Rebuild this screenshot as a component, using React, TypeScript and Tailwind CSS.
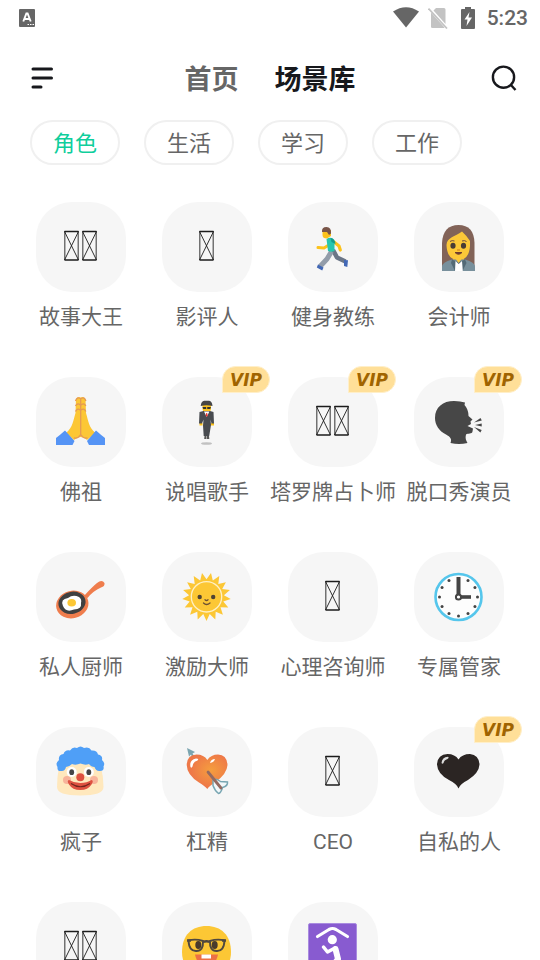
import React, { useState } from 'react';

interface Scene {
  name: string;
  icon: React.ReactNode;
  vip?: boolean;
}

// Placeholder glyph for emoji the device font has no drawing for
const Tofu = ({ count = 1 }: { count?: number }) => {
  const starts = count === 2 ? [28.5, 46.5] : [37.5];
  return (
    <g fill="none" stroke="#1c1c1c">
      {starts.map((x) => (
        <g key={x}>
          <path d={`M${x} 29.5h14M${x} 58h14`} strokeWidth="1.3" />
          <path d={`M${x + 0.3} 29v29M${x + 13.7} 29v29`} strokeWidth="1.2" opacity=".75" />
          <path d={`M${x} 29.5l14 28.500M${x + 14} 29.5l-14 28.500`} strokeWidth=".9" />
        </g>
      ))}
    </g>
  );
};

const Runner = () => (
  <g fill="none" strokeLinejoin="round">
    <path d="M45 48L49 55.500L57.500 59.500" stroke="#6b7687" strokeWidth="4.500" />
    <path d="M56 58l4 .3-.7 6.700-3.300-1z" fill="#4268b5" />
    <path d="M43.500 49.500L39 57L32 64.500" stroke="#939daa" strokeWidth="5" />
    <path d="M30 62.500l5.500 3-1.300 3-5.400-3z" fill="#4268b5" />
    <path d="M40 43.500L36 46L30 45.500" stroke="#fcc21b" strokeWidth="3" strokeLinecap="round" />
    <path d="M46 40L51 44L52.300 48" stroke="#fcc21b" strokeWidth="3.200" strokeLinecap="round" />
    <path d="M38.500 37C42 34.500 46 36 46.500 40L46.500 49Q43 50.500 40 49Z" fill="#26c6ae" />
    <path d="M42.500 36q4.500 .5 5 6l-4-2z" fill="#149c8b" />
    <path d="M34.500 28h8.500v6l-4 2.500q-4.500 0-4.500-3.500z" fill="#fcc21b" />
    <path d="M34 30q-.5-5 4.500-5 5 .3 4.500 6.500l-2 1.500-2-3z" fill="#795548" />
  </g>
);

const OfficeWoman = () => (
  <g>
    <path d="M28 69V41Q29 23 44.500 23Q60 23 60.500 41V69Z" fill="#826358" />
    <path d="M39 53h11v9l-5 5-6-5z" fill="#eba52d" />
    <path d="M32.500 43C33 35 41 35 48 29.500Q52 33 56 39V44Q55 58 44.500 58Q33 58 32.500 43Z" fill="#fcc838" />
    <ellipse cx="39" cy="43.800" rx="2.600" ry="3" fill="#493c35" />
    <ellipse cx="49.500" cy="43.800" rx="2.600" ry="3" fill="#493c35" />
    <path d="M36 39.500q2-1.500 4.500-.5M48 39q2.500-1 4.500.5" fill="none" stroke="#6d4c41" strokeWidth="1" />
    <path d="M43 48h3" stroke="#d88b20" strokeWidth="1.200" />
    <path d="M41 50.500h7q-3.500 3.500-7 0z" fill="#6d3c2f" stroke="#6d3c2f" />
    <path d="M28 69v-4q0-5 10-7.500h13q10 2.500 10 7.500v4z" fill="#78909c" />
    <path d="M38 57.500l-1 3.500 4 8h7.500l4-8-1.500-3.500-6.500 3z" fill="#536a76" />
    <path d="M41.500 59l3.200 3 3.300-3 .8 10h-7.800z" fill="#fff" />
    <path d="M41 56l3.700 5 3.500-5z" fill="#fcc838" />
  </g>
);

const PrayingHands = () => (
  <g>
    <path d="M30 56C37 50 37 44 39.500 36L40 22Q42 19 44.700 20.500Q47.500 19 49.500 22L50 36C52.500 44 52.500 50 59.500 56L51 63Q48 60 44.700 60Q41.500 60 38 63Z" fill="#fcc735" />
    <path d="M44.700 21v38M39.500 24q1.500-4.500 4.700-2.500M45.200 21.500q3.200-2 4.700 2.500M39.500 29q2-3.500 4.700-1M45.200 28q2.700-2.500 4.700 1M39.500 34.500q2-4 4.700-1.500M45.200 33q2.700-2.500 4.700 1.500M38 61q4 1 6.700-3.500Q47.500 62 51.500 61" fill="none" stroke="#e59a55" strokeWidth="1.300" />
    <path d="M20 61q4-3 9-7.500L38.500 64l-2 4H20zM69 61q-4-3-9-7.500L51 64l2 4h16z" fill="#5594f5" />
  </g>
);

const SuitMan = () => (
  <g>
    <ellipse cx="44.500" cy="66.500" rx="5.500" ry="1.300" fill="#c1c1c1" />
    <path d="M40.500 28h8.500v4q-1 4.500-4.300 4.500T40.500 32z" fill="#fcc21b" />
    <path d="M38.700 29q.5-5 3.500-5.300h5Q50 24 50.500 29q-6-1.500-11.800 0z" fill="#464646" />
    <path d="M40.500 30h3.700v2h-3zM45.200 30H49l-.8 2h-3z" fill="#333" />
    <path d="M37.500 46h3v2.500h-3zM49 46h3v2.500h-3z" fill="#fcc21b" />
    <path d="M41.500 34L37.500 35 37 46.500h3l1.500-4-.5 6 .7 10.500h5.500L49 48l-.5-5.500 1 4h2.500L51.500 35 48 34z" fill="#484b50" />
    <path d="M42 34.500l2.700 5.500 2.700-5.500z" fill="#fff" />
    <path d="M44.200 36h1l.5 2.500-1 1.500-.9-1.500z" fill="#e53935" />
    <path d="M42.500 59h2v3h-2.300zM45 59h2l.3 3H45z" fill="#555" />
  </g>
);

const SpeakingHead = () => (
  <g fill="#474747">
    <path d="M36.500 66C38 62 36.500 60 32 57.500C25 54 21 48 21 41C21 30 29 24 40 24C45 24 47.500 25 51 25.500L50.500 28C54 32 54.500 36 54.500 39L58.500 42.500L56.500 44.500L57 47L53.500 49L59 51.500L58.500 54.500C58 57.500 54 56 52 57.500C51 61 52 63.500 53.500 66Q45 68 36.500 66Z" />
    <path d="M60 45.500l6.500-4.500 1.300 2.500zM61 48l6.700-1.500v3zM60 50l7.700 3-1.300 2.500z" />
  </g>
);

const FryingPan = () => (
  <g>
    <path d="M48 44Q56 35 61 31Q66 27 68.500 31Q69 34.500 65 35.500Q57 39 51.500 46Z" fill="#ef7d4d" />
    <ellipse cx="36.300" cy="52.500" rx="16.300" ry="13.700" fill="#ef7d4d" transform="rotate(-14 36.300 52.500)" />
    <ellipse cx="36" cy="50.800" rx="13.700" ry="11" fill="#404040" transform="rotate(-14 36 50.800)" />
    <path d="M27 54Q24 47 32 46Q37 42 43 45Q46 47 45 51Q46 57 38 57.500Q30 61 27 54Z" fill="#fff" />
    <ellipse cx="35.700" cy="50.700" rx="4.300" ry="3.800" fill="#fcc735" />
  </g>
);

const sunRays = Array.from({ length: 34 }, (_, i) => {
  const r = i % 2 ? 24.3 : 17.5;
  const a = (i * Math.PI) / 17 + Math.PI / 2 - Math.PI / 17;
  return `${(44.5 + r * Math.cos(a)).toFixed(1)},${(44.8 + r * Math.sin(a)).toFixed(1)}`;
}).join(' ');

const Sun = () => (
  <g>
    <polygon points={sunRays} fill="#fcc735" />
    <circle cx="44.500" cy="44.800" r="15.200" fill="#fcc735" stroke="#fff0c4" strokeWidth="1.300" />
    <circle cx="37.700" cy="45" r="2.200" fill="#504333" />
    <circle cx="51.200" cy="45" r="2.200" fill="#504333" />
    <path d="M41.500 51q3 3 6.500 0M43 47.800q1.500 1.500 3 0" fill="none" stroke="#6d5132" strokeWidth="1.300" strokeLinecap="round" />
  </g>
);

const Clock = () => (
  <g>
    <circle cx="44.500" cy="45" r="23" fill="#fdfdfd" stroke="#55c6ec" strokeWidth="2.600" />
    {Array.from({ length: 11 }, (_, i) => {
      const a = ((i + 1) * Math.PI) / 6;
      return <circle key={i} cx={44.5 + 19 * Math.sin(a)} cy={45 - 19 * Math.cos(a)} r="1.500" fill="#444" />;
    })}
    <path d="M44.500 45V25" stroke="#444" strokeWidth="4" />
    <path d="M44.500 45H57" stroke="#444" strokeWidth="3.600" />
    <circle cx="44.500" cy="45" r="2.600" fill="#fff" stroke="#444" strokeWidth="2" />
  </g>
);

const Clown = () => (
  <g>
    <path d="M23 40Q21 50 21 60Q21 68.500 44.300 68.500Q67.500 68.500 67.500 60Q67.500 50 65 40Q44 28 23 40Z" fill="#ffe8bd" />
    <path d="M25 44Q21 44.500 21.500 40Q19 36 23 33Q22 28 27.500 27Q29 22.500 34 23.500Q37 19 41 21Q44.500 18 48 21Q53 19 55.500 23.500Q61 23 62 27.500Q67 28.500 66 33Q69.500 36 67.500 39.500Q68.500 44 64 44Q60 44.500 58.500 40Q55 40 53 37Q49 38.500 44.500 36.500Q40 38.500 36 37Q33 40 30 40Q29 44.500 25 44Z" fill="#4f9ff7" />
    <circle cx="31" cy="53" r="4" fill="#f6a18f" opacity=".75" />
    <circle cx="58" cy="53" r="4" fill="#f6a18f" opacity=".75" />
    <circle cx="35.700" cy="45" r="5" fill="#fff" />
    <circle cx="52.800" cy="45" r="5" fill="#fff" />
    <ellipse cx="35.700" cy="45.200" rx="2.400" ry="2.900" fill="#454545" />
    <ellipse cx="52.800" cy="45.200" rx="2.400" ry="2.900" fill="#454545" />
    <path d="M33 53Q38 56 44.300 56Q51 56 55.500 53Q58 53.500 55.500 57.500Q52 63 44.300 63Q36.500 63 33 57.500Q30.500 53.500 33 53Z" fill="#de5140" />
    <path d="M35 56.500q9.500 6.500 19 0" fill="none" stroke="#70261d" strokeWidth="1.200" />
    <circle cx="44.300" cy="50.300" r="4" fill="#de5140" />
  </g>
);

const ArrowHeart = () => (
  <g>
    <defs>
      <radialGradient id="heartFill" cx=".6" cy=".45" r=".5">
        <stop offset="0" stopColor="#f59e3e" />
        <stop offset="1" stopColor="#ee7848" />
      </radialGradient>
    </defs>
    <path d="M25 21l8 4-2.500 1.500 2 3-2.500 .5-1-2.500-2 2z" fill="#7ba5b0" />
    <path d="M45.300 62Q43 59 37 55.500Q25 48 24.700 38Q25 28 34.500 27.500Q42 27.500 45.300 33Q49 27.500 56 27.500Q65 28 65.500 38Q65 47 53 55.500Q47 59 45.300 62Z" fill="url(#heartFill)" />
    <path d="M28.500 40q-1.500-7 5.500-8.500 3.500 0 1.500 2-4.500 1-5 6-1 2-2 .5zM48 36q1-4 5-4-1 3.500-5 4z" fill="#fff" />
    <path d="M51 58.500L51 52Q55 51.500 58.500 54.500L65.500 55Q66 59 60.500 60.500Q59 66 56.500 66.500Q53 64 51 58.500Z" fill="#f2f8fa" stroke="#78a6b2" strokeWidth="1.500" transform="rotate(0 58 59)" />
    <path d="M46 45L59 61" stroke="#946a61" strokeWidth="2.800" strokeLinecap="round" />
  </g>
);

const BlackHeart = () => (
  <g>
    <path d="M44.500 61.500Q43 57 35 53Q23.500 47 23 37.500Q23.500 27.500 33.500 27Q41 27 44.500 32.500Q48 27 56 27Q65 28 65.500 37.500Q65 46 54 53Q46 57 44.500 61.500Z" fill="#2b2523" />
    <path d="M27.500 36q.5-6 6.500-6.300 1.500 1-.5 2.300-3.500 1-4 4-1 1.500-2 0z" fill="#ddd" />
  </g>
);

const NerdFace = () => (
  <g>
    <path d="M20 50C20 33 30 24 44.500 24C59 24 69 33 69 50C69 66 58 72 44.500 72C31 72 20 66 20 50Z" fill="#fcc735" />
    <ellipse cx="36.300" cy="43" rx="3" ry="4" fill="#493b2c" />
    <ellipse cx="52.700" cy="43" rx="3" ry="4" fill="#493b2c" />
    <path d="M26.500 38.500Q33.500 36.500 41 39Q41.500 49 34.500 49Q27 49.500 26.500 38.500ZM48 39Q55.500 36.500 62.500 38.500Q62 49.500 54.500 49Q47.500 49 48 39Z" fill="none" stroke="#50483f" strokeWidth="1.900" />
    <path d="M25 38.500H29M60 38.500h4M41 40q3.500-1.500 7 0" fill="none" stroke="#50483f" strokeWidth="2.400" />
    <path d="M33 52.500h23q-2 11-11.500 11T33 52.500z" fill="#ed7045" />
    <path d="M39.500 52.500h9.500v4h-9.500z" fill="#fff" />
  </g>
);

const Worship = () => (
  <g>
    <rect x="20.500" y="21.500" width="48" height="48" rx="1.500" fill="#885bd0" stroke="#a98be0" />
    <g fill="none" stroke="#fff" strokeLinecap="round" strokeLinejoin="round">
      <path d="M29.500 34.500L41 27.500Q44.500 25.500 48 27.500L59.500 34.500" strokeWidth="3.200" />
      <path d="M35.500 45L39.500 50L47 46" strokeWidth="3.500" />
      <path d="M47.500 47L50 57L44 65H34" strokeWidth="6" />
    </g>
    <circle cx="44.300" cy="37.700" r="4.600" fill="#fff" />
  </g>
);

const scenes: Scene[] = [
  { name: '故事大王', icon: <Tofu count={2} /> },
  { name: '影评人', icon: <Tofu /> },
  { name: '健身教练', icon: <Runner /> },
  { name: '会计师', icon: <OfficeWoman /> },
  { name: '佛祖', icon: <PrayingHands /> },
  { name: '说唱歌手', icon: <SuitMan />, vip: true },
  { name: '塔罗牌占卜师', icon: <Tofu count={2} />, vip: true },
  { name: '脱口秀演员', icon: <SpeakingHead />, vip: true },
  { name: '私人厨师', icon: <FryingPan /> },
  { name: '激励大师', icon: <Sun /> },
  { name: '心理咨询师', icon: <Tofu /> },
  { name: '专属管家', icon: <Clock /> },
  { name: '疯子', icon: <Clown /> },
  { name: '杠精', icon: <ArrowHeart /> },
  { name: 'CEO', icon: <Tofu /> },
  { name: '自私的人', icon: <BlackHeart />, vip: true },
  { name: '', icon: <Tofu count={2} /> },
  { name: '', icon: <NerdFace /> },
  { name: '', icon: <Worship /> },
];

const categories = ['角色', '生活', '学习', '工作'];

const StatusBar = () => (
  <div className="flex h-9 shrink-0 items-center justify-between pl-[19px] pr-3 text-[#666]">
    <svg className="h-[18px] w-4" viewBox="0 0 16 18">
      <rect width="16" height="18" rx="1" fill="#666" />
      <path d="M4.300 12.500L7.400 4.500h1.200l3.100 8M5.600 10h4.800" fill="none" stroke="#fff" strokeWidth="1.900" />
      <path d="M8.500 15.500h1.500M11 15.500h1.500M13.500 15.500H15" stroke="#fff" strokeWidth="1.200" />
    </svg>
    <div className="flex items-center">
      <svg className="h-[22px] w-[26px]" viewBox="0 0 26 22">
        <path d="M0 4.500Q13-4 26 4.500L13 20.500Z" fill="#666" />
      </svg>
      <svg className="ml-[9px] h-[22px] w-5" viewBox="0 0 20 22">
        <path d="M8 1h8q1.500 0 1.500 1.500V17L5.500 3.500z" fill="#c3c3c3" />
        <path d="M3 5.500L16.500 20.500Q16 21 15 21H4.500Q3 21 3 20z" fill="#c3c3c3" />
        <path d="M.5 1.500L19 21.500" stroke="#c3c3c3" strokeWidth="1.700" />
      </svg>
      <svg className="ml-[13px] h-[22px] w-[14px]" viewBox="0 0 14 22">
        <path d="M4 0h6v2h3q1 0 1 1v18q0 1-1 1H1q-1 0-1-1V3q0-1 1-1h3z" fill="#666" />
        <path d="M8.500 5L3.500 12.500h3L5.500 19l5.500-8.500H7.500z" fill="#fff" />
      </svg>
      <span className="ml-3 font-[Roboto,sans-serif] text-[21px] font-medium leading-6">5:23</span>
    </div>
  </div>
);

const VipBadge = () => (
  <span className="absolute -top-[11px] left-[60px] flex h-[27px] w-12 items-center justify-center rounded-2xl rounded-bl-none border border-[#ffefc9] bg-[#ffdf98] font-['DejaVu_Sans',sans-serif] text-[17px] font-bold italic leading-4 text-[#a06400]">
    VIP
  </span>
);

const SceneCard = ({ name, icon, vip }: Scene) => (
  <button className="flex h-[175px] flex-col items-center">
    <span className="relative block size-[90px] shrink-0 rounded-[36px] bg-[#f6f6f6]">
      <svg className="size-[90px]" viewBox="0 0 90 90">{icon}</svg>
      {vip && <VipBadge />}
    </span>
    {name && <span className="mt-[10px] whitespace-nowrap text-[21px] leading-[30px] text-[#666]">{name}</span>}
  </button>
);

export default function App() {
  const [category, setCategory] = useState('角色');

  return (
    <div className="flex h-screen flex-col overflow-hidden bg-white font-[Roboto,'Noto_Sans_CJK_SC',sans-serif]">
      <StatusBar />

      <header className="flex h-[84px] shrink-0 items-center justify-between pl-[30px] pr-[22px]">
        <button aria-label="菜单">
          <svg className="h-6 w-6" viewBox="0 0 24 24" fill="none" stroke="#17181c" strokeWidth="3" strokeLinecap="round">
            <path d="M3 3h18.500M3 12h18.500M3 21h8" />
          </svg>
        </button>
        <nav className="flex gap-9 pr-1 pt-1 text-[27px] font-bold leading-10">
          <button className="text-[#666]">首页</button>
          <button className="text-[#17181c]">场景库</button>
        </nav>
        <button aria-label="搜索">
          <svg className="size-7" viewBox="0 0 28 28" fill="none" stroke="#17181c" strokeWidth="2.400">
            <circle cx="13.500" cy="13.200" r="10.600" />
            <path d="M20.500 20.500L25.500 26" />
          </svg>
        </button>
      </header>

      <div className="flex shrink-0 gap-6 px-[30px]">
        {categories.map((item) => (
          <button
            key={item}
            onClick={() => setCategory(item)}
            className={`h-[45px] w-[90px] rounded-full border-2 border-[#f0f0f0] pt-0.5 text-[22px] leading-8 ${
              item === category ? 'text-[#0fce9c]' : 'text-[#666]'
            }`}
          >
            {item}
          </button>
        ))}
      </div>

      <main className="mt-4 min-h-0 flex-1 overflow-y-auto px-[18px] pt-[21px] [scrollbar-width:none]">
        <div className="grid grid-cols-4">
          {scenes.map((scene, index) => (
            <SceneCard key={index} {...scene} />
          ))}
        </div>
      </main>
    </div>
  );
}
